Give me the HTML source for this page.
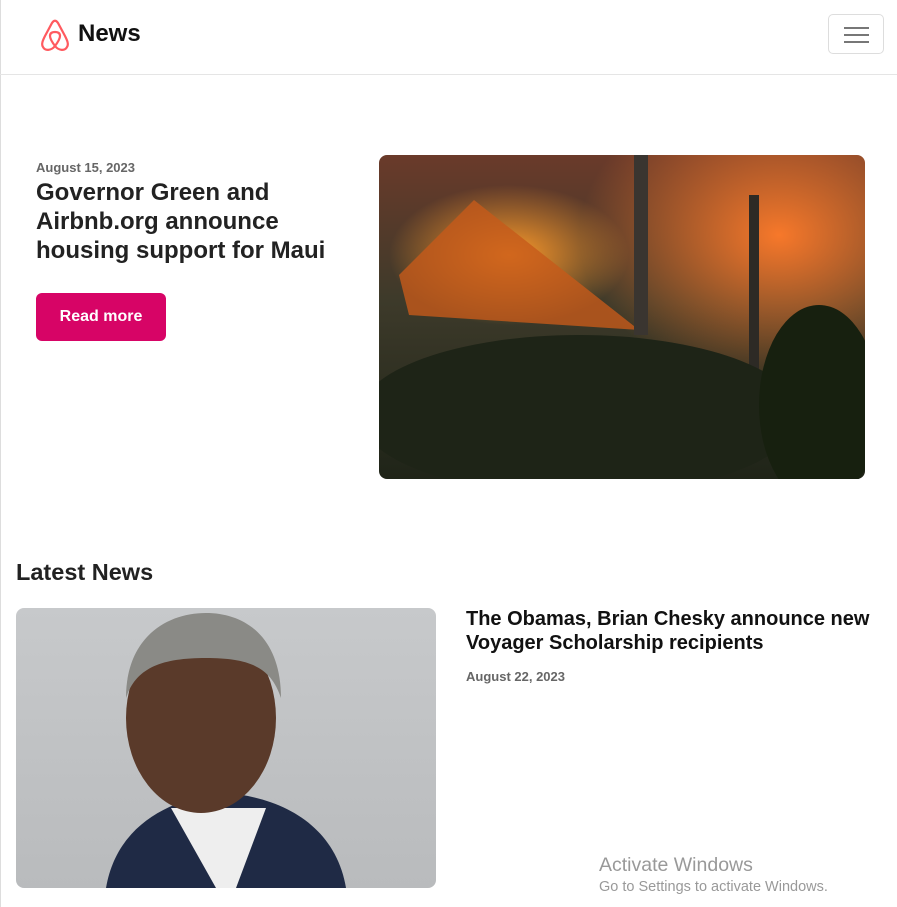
<!DOCTYPE html>
<html><head><meta charset="utf-8"><style>
*{margin:0;padding:0;box-sizing:border-box}
body{width:897px;height:907px;overflow:hidden;background:#fff;font-family:"Liberation Sans",Arial,sans-serif;color:#222;position:relative}
.vl{position:absolute;left:0;top:0;width:1px;height:907px;background:#ddd}
.hdr{height:75px;border-bottom:1px solid #e5e5e5;position:relative}
.logo{position:absolute;left:39px;top:18px}
.brand{position:absolute;left:78px;top:20px;font-size:24px;font-weight:bold;color:#111}
.tog{position:absolute;left:828px;top:14px;width:56px;height:40px;border:1px solid #ddd;border-radius:5px}
.tog i{position:absolute;left:15px;width:25px;height:2px;background:#777}
.date{position:absolute;font-size:13px;font-weight:bold;color:#666}
h1{position:absolute;left:36px;top:178px;font-size:24px;line-height:29px;color:#222;width:330px}
.btn{position:absolute;left:36px;top:293px;width:130px;height:48px;background:#d70466;color:#fff;border-radius:6px;font-weight:bold;font-size:16px;text-align:center;line-height:48px}
.fire{position:absolute;left:379px;top:155px;width:486px;height:324px;border-radius:8px;overflow:hidden;background:
radial-gradient(ellipse 120px 70px at 130px 100px,#ff9a2a,rgba(255,120,20,0) 100%),
radial-gradient(ellipse 200px 150px at 400px 80px,#f7782a,rgba(240,100,30,0) 100%),
linear-gradient(180deg,#6a3a2a 0%,#3d3a2a 45%,#1f2418 100%)}
h2{position:absolute;left:16px;top:559px;font-size:23.5px;color:#222}
.obama{position:absolute;left:16px;top:608px;width:420px;height:280px;border-radius:8px;overflow:hidden;background:linear-gradient(180deg,#c7c9cb,#b9bbbd)}
h3{position:absolute;left:466px;top:607px;font-size:20px;line-height:24px;color:#111;width:425px}
.wm{position:absolute;left:599px;top:854px;color:#999;font-size:19.5px}
.wm small{display:block;font-size:14.5px;margin-top:2px}
</style></head><body>
<div class="vl"></div>
<div class="hdr">
<svg class="logo" width="32" height="34" viewBox="0 0 32 34"><path d="M16 28c-4 5-10 5-12 1-2-3 0-7 2-11l7-13c2-3 4-3 6 0l7 13c2 4 4 8 2 11-2 4-8 4-12-1zm0 0c-3-4-5-7-5-10 0-3 2-4 5-4s5 1 5 4c0 3-2 6-5 10z" fill="none" stroke="#ff5a5f" stroke-width="2.2"/></svg>
<div class="brand">News</div>
<div class="tog"><i style="top:12px"></i><i style="top:19px"></i><i style="top:26px"></i></div>
</div>
<div class="date" style="left:36px;top:160px">August 15, 2023</div>
<h1>Governor Green and Airbnb.org announce housing support for Maui</h1>
<div class="btn">Read more</div>
<div class="fire">
<svg width="486" height="324"><polygon points="20,120 95,45 260,175 30,160" fill="#c55a1a" opacity=".8"/><rect x="255" y="0" width="14" height="180" fill="#3a3530"/><rect x="370" y="40" width="10" height="200" fill="#2d2a25"/><ellipse cx="200" cy="260" rx="220" ry="80" fill="#1e2417"/><ellipse cx="440" cy="250" rx="60" ry="100" fill="#17200f"/></svg>
</div>
<h2>Latest News</h2>
<div class="obama">
<svg width="420" height="280"><path d="M90 280c10-60 60-90 120-95 60 5 110 35 120 95z" fill="#1f2a45"/><path d="M155 200l45 80h20l30-80z" fill="#eee"/><ellipse cx="185" cy="110" rx="75" ry="95" fill="#5a3a2a"/><path d="M110 90c0-60 40-85 80-85s75 25 75 85c-10-30-30-40-75-40s-70 10-80 40z" fill="#8a8a86"/></svg>
</div>
<h3>The Obamas, Brian Chesky announce new Voyager Scholarship recipients</h3>
<div class="date" style="left:466px;top:669px">August 22, 2023</div>
<div class="wm">Activate Windows<small>Go to Settings to activate Windows.</small></div>
</body></html>
